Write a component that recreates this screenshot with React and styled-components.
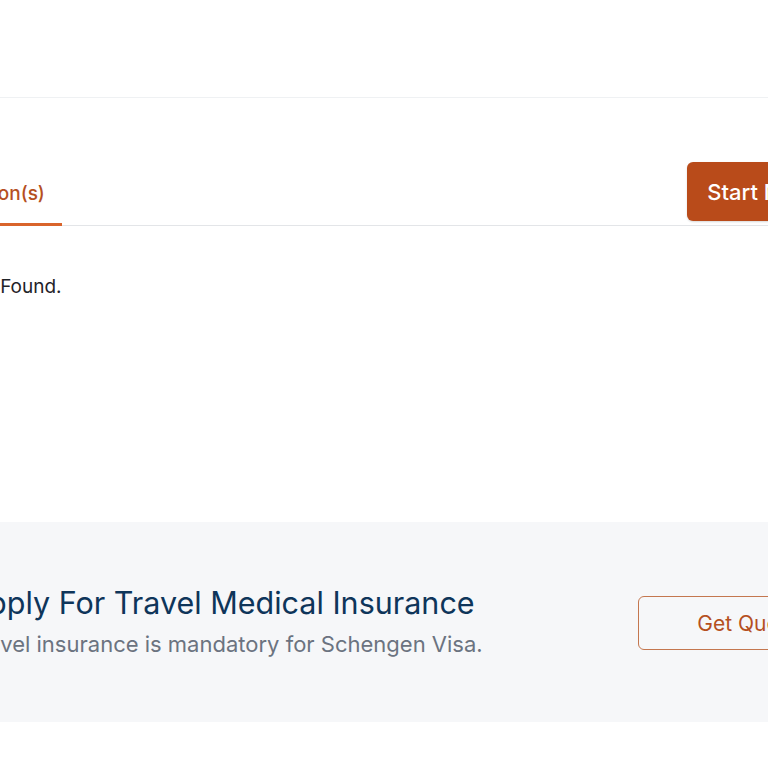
import React from 'react';
import styled, { createGlobalStyle } from 'styled-components';

const GlobalStyle = createGlobalStyle`
 html, body {
  margin: 0;
  padding: 0;
  background: #ffffff;
  overflow: hidden;
 }
 body {
  font-family: Inter, 'Noto Sans', 'Liberation Sans', sans-serif;
  color: #1f2328;
 }
`;

function App() {
 return (
  <>
   <GlobalStyle />
   <Header />
   <Main>
    <MainInner>
     <TabBar>
      <Tabs>
       <Tab active>Application(s)</Tab>
      </Tabs>
      <PrimaryButton>Start New Application</PrimaryButton>
     </TabBar>
     <EmptyText>No Record Found.</EmptyText>
    </MainInner>
   </Main>
   <InsuranceBand>
    <BandInner>
     <BandCopy>
      <BandTitle>Apply For Travel Medical Insurance</BandTitle>
      <BandText>Travel insurance is mandatory for Schengen Visa.</BandText>
     </BandCopy>
     <OutlineButton>Get Quote</OutlineButton>
    </BandInner>
   </InsuranceBand>
  </>
 );
}

const Header = styled.header`
 height: 97px;
 border-bottom: 1px solid #eff1f3;
`;

const Main = styled.section`
 padding-top: 64px;
 height: 360px;
`;

const MainInner = styled.div`
 width: 1056px;
 margin-left: -100px;
`;

const TabBar = styled.div`
 display: flex;
 justify-content: space-between;
 align-items: flex-end;
 border-bottom: 1px solid #e3e5e8;
`;

const Tabs = styled.div`
 display: flex;
`;

const Tab = styled.div`
 font-size: 19px;
 font-weight: 500;
 color: ${(p) => (p.active ? '#b5501f' : '#4b5563')};
 padding: 0 17px 18px 18px;
 border-bottom: 3px solid ${(p) => (p.active ? '#d9642b' : 'transparent')};
 margin-bottom: -1px;
`;

const PrimaryButton = styled.button`
 font-family: inherit;
 font-size: 22px;
 font-weight: 500;
 color: #ffffff;
 background: #b94b1a;
 border: none;
 border-radius: 6px;
 height: 59px;
 padding: 0 20px;
 margin-bottom: 4px;
 box-shadow: 0 1px 2px rgba(0, 0, 0, 0.15);
`;

const EmptyText = styled.p`
 margin: 49px 0 0 0;
 font-size: 19px;
 color: #1f2328;
`;

const InsuranceBand = styled.section`
 background: #f6f7f9;
 height: 200px;
 display: flex;
 align-items: center;
`;

const BandInner = styled.div`
 display: flex;
 align-items: center;
 justify-content: space-between;
 width: 890px;
 flex-shrink: 0;
 margin-left: -33px;
`;

const BandCopy = styled.div`
 margin-top: -2px;
`;

const BandTitle = styled.h2`
 margin: 0;
 font-size: 30.5px;
 font-weight: 400;
 color: #0e355a;
 line-height: 40px;
`;

const BandText = styled.p`
 margin: 6px 0 0 0;
 font-size: 22px;
 color: #6b7380;
 line-height: 30px;
`;

const OutlineButton = styled.button`
 font-family: inherit;
 font-size: 21px;
 color: #b5501f;
 background: transparent;
 border: 1px solid #c4774f;
 border-radius: 6px;
 height: 54px;
 padding: 0 58px;
 margin-top: 2px;
`;

export default App;
